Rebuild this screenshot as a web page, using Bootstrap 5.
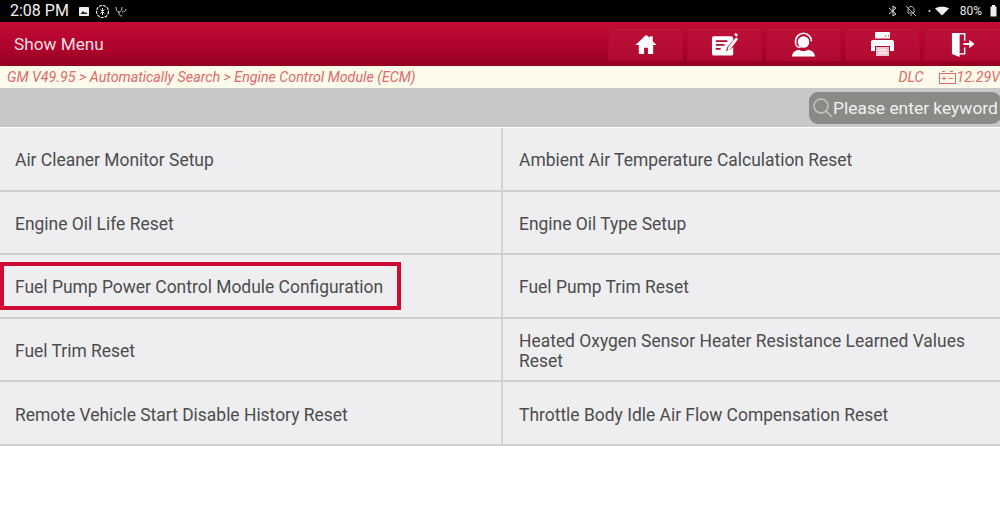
<!DOCTYPE html>
<html lang="en">
<head>
<meta charset="UTF-8" />
<title>Show Menu</title>
<link rel="stylesheet" href="https://cdn.jsdelivr.net/npm/bootstrap@5.3.0/dist/css/bootstrap.min.css" />
<style>
  html, body { height: 514px; overflow: hidden; background: #fff; }
  body { font-family: Roboto, "Liberation Sans", sans-serif; }
  .status-strip { height: 22px; background: #000; color: #e8e8e8; padding: 0 3px 0 10px; font-size: 12px; }
  .status-time { font-size: 16px; color: #f2f2f2; margin-right: 9px; }
  .status-left-gap { margin-right: 5px; }
  .status-right-gap { margin-right: 8px; }
  .status-wide-gap { margin-right: 11px; }
  .title-strip { height: 44px; background: linear-gradient(#c40a35, #a8022a 70%, #93001f); color: #f7dfe3; font-size: 17.2px; padding-left: 14px; }
  .title-text { padding-top: 1px; }
  .tool-btn { width: 75px; height: 34px; background: linear-gradient(#bd1039, #b10a31); border: 1px solid #b3072e; color: #fff; }
  .tool-btn:last-child { width: 77px; margin-right: -1px; }
  .crumb-strip { height: 22px; background: #fdfbea; color: #e0686c; font-size: 14.25px; font-style: italic; padding: 1px 0 0 7px; white-space: nowrap; }
  .search-strip { height: 39px; background: #c8c8c8; }
  .search-pill { width: 192px; height: 32px; margin-right: -1px; background: #8a8a86; border-radius: 9px; color: #f1f1f1; font-size: 17.4px; padding-left: 3px; white-space: nowrap; overflow: hidden; }
  .search-pill span { padding-top: 2px; }
  .menu-grid { display: grid; grid-template-columns: 503px 1fr; grid-auto-rows: 63.6px; margin-top: 1px; }
  .menu-cell { position: relative; background: #eeeeF0; color: #4c4c4c; font-size: 17.45px; line-height: 20px; padding: 3px 30px 0 15px; border-bottom: 2px solid #cfcfcf; }
  .menu-cell:nth-child(odd) { border-right: 2px solid #d2d2d2; }
  .menu-cell:nth-child(even) { padding-left: 16px; }
  .red-frame { position: absolute; left: 0; top: 7px; width: 401px; height: 48px; border: 4px solid #cf0a35; }
</style>
</head>
<body>

<div class="status-strip d-flex align-items-center">
  <span class="status-time">2:08 PM</span>
  <svg class="status-left-gap" width="12" height="11" viewBox="0 0 12 11"><rect x="1" y="1" width="10" height="9" rx="1" fill="#eee"/><path d="M2.500 8l2.500-3 2 2 1-1 1.500 2z" fill="#222"/></svg>
  <svg class="status-left-gap" width="15" height="15" viewBox="0 0 15 15" fill="none" stroke="#eee"><circle cx="7.500" cy="7.500" r="6" stroke-width="1.200" stroke-dasharray="3 1"/><path d="M5.500 5.500l4 4M9.500 5.500l-4 4M7.500 4v7" stroke-width="1"/></svg>
  <svg width="12" height="12" viewBox="0 0 12 12" fill="none" stroke="#ccc"><path d="M1 2c0 3 1 5 3 5s3-2 3-5M4 7v2c0 1 1 2 3 2M7 7c2 0 4-1 4-3"/></svg>
  <span class="ms-auto d-flex align-items-center">
    <svg class="status-right-gap" width="9" height="12" viewBox="0 0 9 12" fill="none" stroke="#ddd"><path d="M1 3l7 6-3 2V1l3 2-7 6"/></svg>
    <svg class="status-wide-gap" width="12" height="12" viewBox="0 0 12 12" fill="none" stroke="#bbb"><path d="M1 1l10 10M6 1.500c2 0 3 1.500 3 3.500v3H3V5c0-2 1-3.500 3-3.500zM5 10h2"/></svg>
    <svg class="status-wide-gap" width="21" height="10" viewBox="0 0 21 10"><circle cx="1.500" cy="5" r="1" fill="#ddd"/><path d="M7 2.500c3-2.500 11-2.500 14 0L14 9.500z" fill="#eee"/></svg>
    <span class="status-right-gap">80%</span>
    <svg width="7" height="12" viewBox="0 0 7 12"><rect x="0.500" y="1.500" width="6" height="10" fill="#eee"/><rect x="2" y="0" width="3" height="2" fill="#eee"/></svg>
  </span>
</div>

<div class="title-strip d-flex align-items-center justify-content-between">
  <span class="title-text">Show Menu</span>
  <div class="d-flex gap-1">
    <div class="tool-btn d-flex align-items-center justify-content-center">
      <svg width="24" height="23" viewBox="0 0 24 24" fill="#fff"><path d="M12 2L1 12.500h3.500V22h5.500v-6.500h4V22h5.500v-9.500H23l-4-3.800V3.500h-3v1.300z"/></svg>
    </div>
    <div class="tool-btn d-flex align-items-center justify-content-center">
      <svg width="27" height="26" viewBox="0 0 28 26" fill="#fff"><path d="M1 7a2 2 0 0 1 2-2h18a2 2 0 0 1 2 2v2l-6 7-1.500 4.500 5-2 2.500-2.500v7a2 2 0 0 1-2 2H3a2 2 0 0 1-2-2z"/><path d="M5 10h12M5 14h9M5 18h5" stroke="#b8072f" stroke-width="1.800"/><path d="M18 16L26 6l2 2-8 10.500-3 1.500z"/><path d="M24 3.500l1.500-2 2.500 2-1.500 2z"/></svg>
    </div>
    <div class="tool-btn d-flex align-items-center justify-content-center">
      <svg width="25" height="25" viewBox="0 0 26 26" fill="none" stroke="#fff"><circle cx="13" cy="10.500" r="6" fill="#fff" stroke="none"/><path d="M4.800 13V9.500a8.200 8.200 0 0 1 16.400 0" stroke-width="1.800"/><path d="M5 13c.5 2 2.500 3 5 3" stroke-width="1.200"/><path d="M1 25.500c.5-4.500 3.500-6.500 7.500-7 2.500 2 6.500 2 9 0 4 .5 7 2.500 7.500 7z" fill="#fff" stroke="none"/></svg>
    </div>
    <div class="tool-btn d-flex align-items-center justify-content-center">
      <svg width="25" height="24" viewBox="0 0 25 24" fill="#fff"><path d="M5 0h15v6.500H5z"/><path d="M1 10a2 2 0 0 1 2-2h19a2 2 0 0 1 2 2v9h-4v-5H5v5H1z"/><path d="M6 15h13v9H6z" fill="#f3c3cf"/><path d="M8 18h9M8 21h9" stroke="#fff"/><path d="M18 4h1M15 4h1" stroke="#b8072f"/></svg>
    </div>
    <div class="tool-btn d-flex align-items-center justify-content-center">
      <svg width="24" height="25" viewBox="0 0 25 26" fill="#fff"><path d="M1 1h14v8h-1.500V2.500H9V22h4.500v-6H15v7.500H9V26l-8-3z"/><path d="M13 11.500h6V8l5.500 4.500L19 17v-3.500h-6z"/></svg>
    </div>
  </div>
</div>

<div class="crumb-strip d-flex align-items-center justify-content-between">
  <span>GM V49.95 &gt; Automatically Search &gt; Engine Control Module (ECM)</span>
  <span class="d-flex align-items-center">DLC
    <svg class="ms-3" width="17" height="13" viewBox="0 0 17 13" fill="none" stroke="#e0686c"><rect x="0.500" y="2.500" width="16" height="10"/><path d="M3 .5h3M11 .5h3M3 7.500h4M5 5.500v4M10 7.500h4"/></svg>12.29V
  </span>
</div>

<div class="search-strip d-flex align-items-center justify-content-end">
  <div class="search-pill d-flex align-items-center">
    <svg width="21" height="21" viewBox="0 0 21 21" fill="none" stroke="#c4c4c4" stroke-width="1.500"><circle cx="9" cy="9" r="7"/><path d="M14 14l6 6"/></svg>
    <span>Please enter keyword</span>
  </div>
</div>

<div class="menu-grid">
  <div class="menu-cell d-flex align-items-center">Air Cleaner Monitor Setup</div>
  <div class="menu-cell d-flex align-items-center">Ambient Air Temperature Calculation Reset</div>
  <div class="menu-cell d-flex align-items-center">Engine Oil Life Reset</div>
  <div class="menu-cell d-flex align-items-center">Engine Oil Type Setup</div>
  <div class="menu-cell d-flex align-items-center">Fuel Pump Power Control Module Configuration<span class="red-frame"></span></div>
  <div class="menu-cell d-flex align-items-center">Fuel Pump Trim Reset</div>
  <div class="menu-cell d-flex align-items-center">Fuel Trim Reset</div>
  <div class="menu-cell d-flex align-items-center">Heated Oxygen Sensor Heater Resistance Learned Values Reset</div>
  <div class="menu-cell d-flex align-items-center">Remote Vehicle Start Disable History Reset</div>
  <div class="menu-cell d-flex align-items-center">Throttle Body Idle Air Flow Compensation Reset</div>
</div>

<script src="https://cdn.jsdelivr.net/npm/bootstrap@5.3.0/dist/js/bootstrap.bundle.min.js"></script>
</body>
</html>
